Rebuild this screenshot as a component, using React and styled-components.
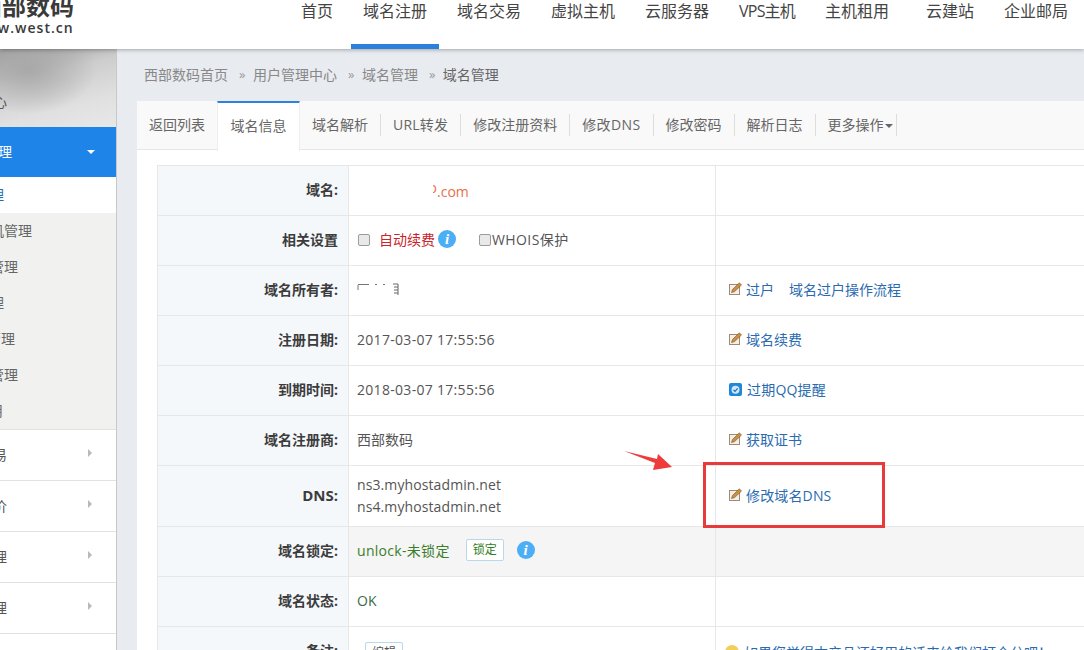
import React from 'react';
import styled, { createGlobalStyle } from 'styled-components';

const FONT = `"Open Sans", "Noto Sans CJK SC", sans-serif`;

const GlobalStyle = createGlobalStyle`
  html, body {
    margin: 0;
    padding: 0;
    height: 650px;
    overflow: hidden;
    background: #fff;
    font-family: ${FONT};
    font-size: 14px;
    color: #555;
  }
  * { box-sizing: border-box; }
`;

const Page = styled.div`
  position: relative;
  width: 1084px;
  height: 650px;
  overflow: hidden;
  display: flex;
  flex-direction: column;
`;

const Header = styled.header`
  position: relative;
  z-index: 2;
  flex: 0 0 49px;
  display: flex;
  background: #fff;
  box-shadow: 0 1px 4px rgba(0, 0, 0, 0.3);
`;

const Logo = styled.div`
  flex: 0 0 289px;
  height: 49px;
  overflow: hidden;
  color: #3a3a3a;
`;

const LogoName = styled.div`
  margin: -9px 0 0 -22px;
  font-size: 24px;
  line-height: 29px;
  font-weight: 700;
  white-space: nowrap;
`;

const LogoSite = styled.div`
  margin: 0 0 0 -27px;
  font-size: 14px;
  line-height: 16px;
  font-weight: 600;
  letter-spacing: 1px;
  white-space: nowrap;
`;

const Nav = styled.nav`
  display: flex;
  gap: 6px;
`;

const NavItem = styled.a`
  display: block;
  height: 49px;
  margin-left: ${(p) => p.$left || 0}px;
  padding: 0 12px;
  font-size: 16px;
  line-height: 23px;
  letter-spacing: ${(p) => p.$spacing || 0}px;
  color: #444;
  white-space: nowrap;
  border-bottom: 5px solid ${(p) => (p.$active ? '#2b82dc' : 'transparent')};
`;

const Body = styled.div`
  flex: 1;
  min-height: 0;
  display: flex;
`;

const Sidebar = styled.aside`
  flex: 0 0 117px;
  overflow: hidden;
  background: #fff;
  border-right: 1px solid #c8c8c8;
`;

const Label = styled.span`
  display: flex;
  justify-content: flex-end;
  flex: 0 0 ${(p) => p.$end}px;
  width: ${(p) => p.$end}px;
  padding-bottom: 2px;
  white-space: nowrap;
`;

const SideBanner = styled.div`
  height: 78px;
  padding-top: 43px;
  line-height: 20px;
  color: #555;
  background:
    radial-gradient(ellipse at 25% 25%, #a8a8a8 0, rgba(168, 168, 168, 0) 55%),
    linear-gradient(165deg, #9a9a9a 0, #cdcdcd 35%, #e0e0e0 70%, #e8e8e8 100%);
`;

const SideActive = styled.div`
  height: 50px;
  display: flex;
  align-items: center;
  justify-content: space-between;
  padding-right: 21px;
  font-size: 14px;
  color: #fff;
  background: #1f84e8;
`;

const CaretDown = styled.i`
  width: 0;
  height: 0;
  border-left: 4px solid transparent;
  border-right: 4px solid transparent;
  border-top: 4px solid #fff;
`;

const SubList = styled.div`
  background: #f1f1f0;
`;

const SubItem = styled.div`
  height: 36px;
  display: flex;
  align-items: center;
  color: ${(p) => (p.$active ? '#2a6bb0' : '#666')};
  background: ${(p) => (p.$active ? '#fff' : 'transparent')};
`;

const SideItem = styled.div`
  height: 51px;
  display: flex;
  align-items: center;
  justify-content: space-between;
  padding-right: 24px;
  color: #555;
  border-top: 1px solid #e2e2e2;
`;

const CaretRight = styled.i`
  width: 0;
  height: 0;
  margin-top: -5px;
  border-top: 4px solid transparent;
  border-bottom: 4px solid transparent;
  border-left: 4px solid #b9b9b9;
`;

const Main = styled.main`
  flex: 1;
  min-width: 0;
  display: flex;
  flex-direction: column;
  padding-left: 20px;
  background: #e8ebf0;
`;

const Crumbs = styled.div`
  flex: 0 0 52px;
  display: flex;
  align-items: center;
  padding: 0 0 2px 7px;
  color: #888;
`;

const CrumbSep = styled.span`
  margin: 0 7.5px 0 11px;
  font-size: 13px;
  color: #999;
`;

const CrumbLast = styled.span`
  color: #666;
`;

const Panel = styled.section`
  flex: 1;
  min-height: 0;
  overflow: hidden;
  background: #fff;
`;

const Tabs = styled.div`
  height: 49px;
  display: flex;
  align-items: flex-start;
  background: #f9f9f9;
  border-bottom: 1px solid #e6e6e6;
`;

const Tab = styled.a`
  display: block;
  height: 49px;
  padding: 14px ${(p) => p.$right ?? 12}px 0 12px;
  line-height: 20px;
  letter-spacing: ${(p) => p.$spacing || 0}px;
  color: #666;
  white-space: nowrap;
`;

const ActiveTab = styled(Tab)`
  height: 50px;
  width: 83px;
  padding: 13px 0 0;
  text-align: center;
  background: #fff;
  border-top: 2px solid #2b82dc;
  border-left: 1px solid #eee;
  border-right: 1px solid #eee;
`;

const TabSep = styled.i`
  flex: 0 0 1px;
  height: 22px;
  margin-top: 13px;
  background: #ddd;
`;

const TabCaret = styled.i`
  display: inline-block;
  margin-left: 1px;
  vertical-align: 2px;
  border-left: 4px solid transparent;
  border-right: 4px solid transparent;
  border-top: 4px solid #666;
`;

const TableWrap = styled.div`
  padding: 15px 0 0 20px;
`;

const Table = styled.table`
  width: 1000px;
  table-layout: fixed;
  border-collapse: collapse;
`;

const Row = styled.tr`
  height: ${(p) => p.$h || 50}px;
  background: ${(p) => (p.$shade ? '#f5f5f5' : '#fff')};
`;

const Th = styled.th`
  width: 191px;
  padding: 0 10px 3px 0;
  text-align: right;
  font-weight: 700;
  font-size: ${(p) => (p.$latin ? 15 : 14)}px;
  color: #3c3c3c;
  background: #f5f8fb;
  border: 1px solid #e7e7e7;
`;

const Td = styled.td`
  width: ${(p) => p.$w}px;
  padding: 0 0 ${(p) => (p.$flat ? 0 : 3)}px 8px;
  letter-spacing: ${(p) => p.$spacing || 0}px;
  color: ${(p) => p.$color || '#555'};
  border: 1px solid #e7e7e7;
`;

const ActionCell = styled(Td)`
  padding-left: 13px;
`;

const Inline = styled.div`
  display: flex;
  align-items: center;
`;

const Domain = styled.span`
  margin-left: 76px;
  color: #e8704a;
`;

const OpenO = styled.span`
  display: inline-block;
  width: 4px;
  overflow: hidden;
  direction: rtl;
`;

const Check = styled.input.attrs({ type: 'checkbox' })`
  appearance: none;
  width: 12px;
  height: 12px;
  margin: 1px ${(p) => p.$gap}px 0 ${(p) => p.$left}px;
  border: 1px solid #9a9a9a;
  border-radius: 2px;
  background: #e9e9e9;
`;

const RedText = styled.span`
  color: #c9252b;
`;

const WhoisText = styled.span`
  letter-spacing: 0.4px;
`;

const UnlockText = styled.span`
  letter-spacing: 0.3px;
`;

const Info = styled.span`
  display: inline-flex;
  align-items: center;
  justify-content: center;
  width: 18px;
  height: 18px;
  margin-left: ${(p) => p.$left}px;
  border-radius: 50%;
  background: #4caef5;
  color: #fff;
  font: italic 700 15px/18px "Liberation Serif", serif;
`;

const DnsLine = styled.div`
  line-height: 22px;
`;

const LockBtn = styled.span`
  display: inline-block;
  width: 38px;
  height: 22px;
  margin-left: 16px;
  text-align: center;
  font-size: 12px;
  line-height: 20px;
  color: #2f7d20;
  background: #fff;
  border: 1px solid #b7d9ea;
  border-radius: 2px;
`;

const EditBtn = styled(LockBtn)`
  margin: 3px 0 0 8px;
  color: #555;
`;

const Link = styled.a`
  color: #2a6bb0;
  margin-left: ${(p) => p.$left || 0}px;
  letter-spacing: ${(p) => p.$spacing || 0}px;
  white-space: nowrap;
`;

const IconSlot = styled.span`
  display: inline-flex;
  flex: 0 0 ${(p) => p.$w}px;
  width: ${(p) => p.$w}px;
`;

const Smiley = styled.span`
  flex: 0 0 14px;
  width: 14px;
  height: 14px;
  margin: 0 5px 0 -4px;
  border-radius: 50%;
  background: #f2cf5b;
`;

const Arrow = styled.svg`
  position: absolute;
  left: 624px;
  top: 451px;
`;

const MarkBox = styled.div`
  position: absolute;
  left: 703px;
  top: 462px;
  width: 182px;
  height: 66px;
  border: 3px solid #e83a3a;
`;

const EditIcon = () => (
  <IconSlot $w={17}>
    <svg width="13" height="14" viewBox="0 0 13 14">
      <rect x="0.5" y="2.5" width="10" height="10" fill="#f4efe8" stroke="#a08a74" />
      <path d="M2.5 10.5 L3.5 7.5 L10.3 0.8 L12.5 3 L5.6 9.6 Z" fill="#cf8f3e" stroke="#6f5230" strokeWidth="0.6" />
    </svg>
  </IconSlot>
);

const RemindIcon = () => (
  <IconSlot $w={18}>
    <svg width="13" height="13" viewBox="0 0 13 13">
      <rect width="13" height="13" rx="2" fill="#1f86d8" />
      <circle cx="6.5" cy="6.8" r="4" fill="#cfe6f7" />
      <path d="M4.5 6.8 L6 8.3 L8.6 5.4" fill="none" stroke="#1a6fb5" strokeWidth="1.2" />
    </svg>
  </IconSlot>
);

// what is left of the owner name after it was painted over
const OwnerScrap = () => (
  <svg width="42" height="14" viewBox="0 0 42 14">
    <path d="M1 2.5 H12 M1 3 V8 M18 2.5 H20 M26 2.5 H28" stroke="#777" strokeWidth="1" fill="none" />
    <path d="M36 2 H41 M37 5 H41 M37 8 H41 M37 11 H41 M41 2 V13" stroke="#666" strokeWidth="1" fill="none" />
  </svg>
);

const navItems = [
  { name: '首页' },
  { name: '域名注册', active: true },
  { name: '域名交易' },
  { name: '虚拟主机' },
  { name: '云服务器' },
  { name: 'VPS主机', spacing: -0.8 },
  { name: '主机租用' },
  { name: '云建站', left: 7 },
  { name: '企业邮局' },
];
const subItems = [
  { name: '域名管理', end: 4 },
  { name: '虚拟主机管理', end: 32 },
  { name: '云服务器管理', end: 18 },
  { name: '邮局管理', end: 4 },
  { name: '数据库管理', end: 15 },
  { name: '云建站管理', end: 18 },
  { name: '域名应用', end: 3 },
];
const sideItems = ['域名交易', '云产品报价', '财务管理', '账户管理', ''];
const tabs = [
  { name: '域名解析' },
  { name: 'URL转发', spacing: 0.2 },
  { name: '修改注册资料' },
  { name: '修改DNS', spacing: 0.4 },
  { name: '修改密码' },
  { name: '解析日志' },
];

export default function App() {
  return (
    <Page>
      <GlobalStyle />
      <Header>
        <Logo>
          <LogoName>西部数码</LogoName>
          <LogoSite>www.west.cn</LogoSite>
        </Logo>
        <Nav>
          {navItems.map((item) => (
            <NavItem key={item.name} $active={item.active} $spacing={item.spacing} $left={item.left}>{item.name}</NavItem>
          ))}
        </Nav>
      </Header>
      <Body>
        <Sidebar>
          <SideBanner><Label $end={7}>用户中心</Label></SideBanner>
          <SideActive><Label $end={12}>域名管理</Label><CaretDown /></SideActive>
          <SubList>
            {subItems.map((item, i) => (
              <SubItem key={item.name} $active={i === 0}><Label $end={item.end}>{item.name}</Label></SubItem>
            ))}
          </SubList>
          {sideItems.map((item) => (
            <SideItem key={item}>
              <Label $end={7}>{item}</Label>
              {item && <CaretRight />}
            </SideItem>
          ))}
        </Sidebar>
        <Main>
          <Crumbs>
            西部数码首页<CrumbSep>»</CrumbSep>用户管理中心<CrumbSep>»</CrumbSep>域名管理<CrumbSep>»</CrumbSep>
            <CrumbLast>域名管理</CrumbLast>
          </Crumbs>
          <Panel>
            <Tabs>
              <Tab>返回列表</Tab>
              <ActiveTab>域名信息</ActiveTab>
              {tabs.map((tab) => (
                <React.Fragment key={tab.name}>
                  <Tab $spacing={tab.spacing}>{tab.name}</Tab>
                  <TabSep />
                </React.Fragment>
              ))}
              <Tab $right={3}>更多操作<TabCaret /></Tab>
              <TabSep />
            </Tabs>
            <TableWrap>
              <Table>
                <tbody>
                  <Row>
                    <Th>域名:</Th>
                    <Td $w={367}><Domain><OpenO>o</OpenO>.com</Domain></Td>
                    <ActionCell />
                  </Row>
                  <Row>
                    <Th>相关设置</Th>
                    <Td $w={367}>
                      <Inline>
                        <Check $left={1} $gap={9} />
                        <RedText>自动续费</RedText>
                        <Info $left={3}>i</Info>
                        <Check $left={23} $gap={1} />
                        <WhoisText>WHOIS保护</WhoisText>
                      </Inline>
                    </Td>
                    <ActionCell />
                  </Row>
                  <Row>
                    <Th>域名所有者:</Th>
                    <Td $w={367}><Inline><OwnerScrap /></Inline></Td>
                    <ActionCell>
                      <Inline><EditIcon /><Link>过户</Link><Link $left={15}>域名过户操作流程</Link></Inline>
                    </ActionCell>
                  </Row>
                  <Row>
                    <Th>注册日期:</Th>
                    <Td $w={367} $spacing={0.3}>2017-03-07 17:55:56</Td>
                    <ActionCell><Inline><EditIcon /><Link>域名续费</Link></Inline></ActionCell>
                  </Row>
                  <Row>
                    <Th>到期时间:</Th>
                    <Td $w={367} $spacing={0.3}>2018-03-07 17:55:56</Td>
                    <ActionCell><Inline><RemindIcon /><Link $spacing={0.2}>过期QQ提醒</Link></Inline></ActionCell>
                  </Row>
                  <Row>
                    <Th>域名注册商:</Th>
                    <Td $w={367}>西部数码</Td>
                    <ActionCell><Inline><EditIcon /><Link>获取证书</Link></Inline></ActionCell>
                  </Row>
                  <Row $h={61}>
                    <Th $latin>DNS:</Th>
                    <Td $w={367} $flat $spacing={0.1}>
                      <DnsLine>ns3.myhostadmin.net</DnsLine>
                      <DnsLine>ns4.myhostadmin.net</DnsLine>
                    </Td>
                    <ActionCell><Inline><EditIcon /><Link $spacing={0.15}>修改域名DNS</Link></Inline></ActionCell>
                  </Row>
                  <Row $shade>
                    <Th>域名锁定:</Th>
                    <Td $w={367} $color="#3b7d2c">
                      <Inline>
                        <UnlockText>unlock-未锁定</UnlockText>
                        <LockBtn>锁定</LockBtn>
                        <Info $left={13}>i</Info>
                      </Inline>
                    </Td>
                    <ActionCell />
                  </Row>
                  <Row>
                    <Th>域名状态:</Th>
                    <Td $w={367} $color="#3d6b4a">OK</Td>
                    <ActionCell />
                  </Row>
                  <Row>
                    <Th>备注:</Th>
                    <Td $w={367} $flat><EditBtn>编辑</EditBtn></Td>
                    <ActionCell $flat>
                      <Inline><Smiley /><Link>如果您觉得本产品还好用的话来给我们打个分吧！</Link></Inline>
                    </ActionCell>
                  </Row>
                </tbody>
              </Table>
            </TableWrap>
          </Panel>
        </Main>
      </Body>
      <Arrow width="48" height="20" viewBox="0 0 48 20">
        <polygon points="0,0 33,8 34,3 48,16 29,19 31,12" fill="#ee3b3b" />
      </Arrow>
      <MarkBox />
    </Page>
  );
}
